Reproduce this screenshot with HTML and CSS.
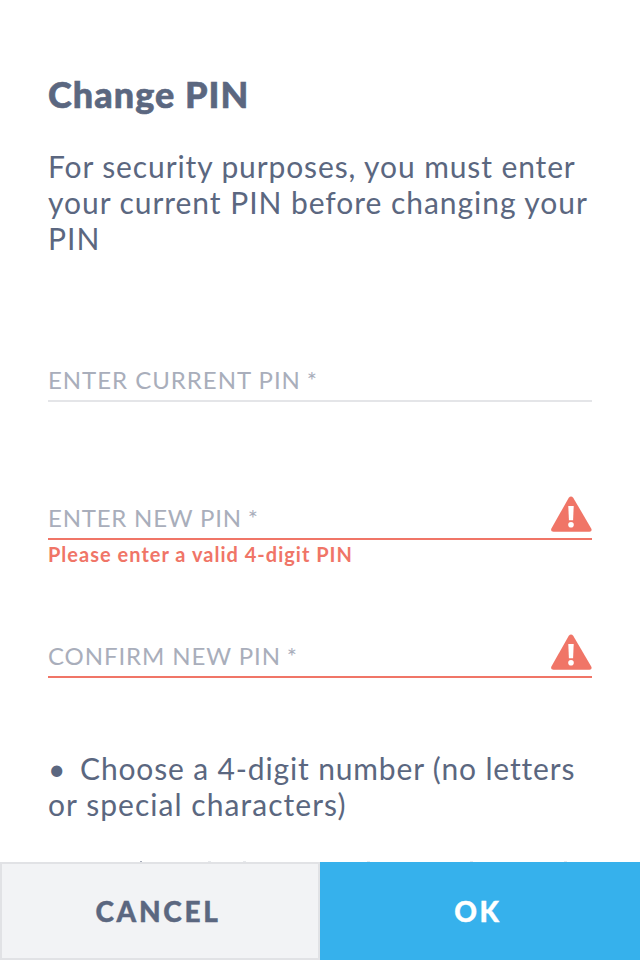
FILE: index.html
```html
<!DOCTYPE html>
<html lang="en">
<head>
<meta charset="utf-8">
<title>Change PIN</title>
<link rel="stylesheet" href="styles.css">
</head>
<body>
<form class="screen">
  <main class="content">
    <h1 class="title">Change PIN</h1>
    <p class="intro"><span class="tight">For security purposes, you must enter</span> <span class="snug">your current PIN before changing your</span> PIN</p>
    <div class="fields">
      <div class="field"><span class="label label-current">ENTER CURRENT PIN<span class="star"> *</span></span></div>
      <div class="field field-error"><span class="label label-new">ENTER NEW PIN<span class="star"> *</span></span>
        <svg class="warn" viewBox="0 0 42 36"><path d="M18.8 1.7Q21 -.9 23.2 1.7L41.2 32.5Q42.6 35.5 39.5 35.7H3.5Q.2 35.5 1.4 32.5Z" fill="#f07567"/><path d="M18.3 10h5.4l-.6 14.2h-4.2z" fill="#fff"/><circle cx="21" cy="28.8" r="2.8" fill="#fff"/></svg>
      </div>
      <p class="message">Please enter a valid 4-digit PIN</p>
      <div class="field field-error"><span class="label label-confirm">CONFIRM NEW PIN<span class="star"> *</span></span>
        <svg class="warn" viewBox="0 0 42 36"><path d="M18.8 1.7Q21 -.9 23.2 1.7L41.2 32.5Q42.6 35.5 39.5 35.7H3.5Q.2 35.5 1.4 32.5Z" fill="#f07567"/><path d="M18.3 10h5.4l-.6 14.2h-4.2z" fill="#fff"/><circle cx="21" cy="28.8" r="2.8" fill="#fff"/></svg>
      </div>
    </div>
    <p class="rule"><span class="bullet">•</span><span class="tighter">Choose a 4-digit number (no letters</span> or special characters)</p>
    <!-- Tips of the next rule, which continues below the fold -->
    <div class="next-rule"><i class="tip tip-strong"></i><i class="tip"></i><i class="tip"></i><i class="tip"></i><i class="tip"></i><i class="tip"></i></div>
  </main>
  <footer class="actions">
    <button type="button" class="button cancel">CANCEL</button>
    <button type="button" class="button ok">OK</button>
  </footer>
</form>
</body>
</html>
```
FILE: styles.css
```css
* { box-sizing: border-box; }
body { margin: 0; background: #fff; color: #5b6780; font-family: Lato, "Liberation Sans", sans-serif; }
h1, p { margin: 0; }
.screen { height: 960px; display: flex; flex-direction: column; overflow: hidden; }
.content { flex: 1; min-height: 0; overflow: hidden; padding: 71px 48px 0; display: flex; flex-direction: column; }
.title { font-size: 36px; line-height: 46px; font-weight: 900; letter-spacing: 1.05px; -webkit-text-stroke: .6px currentColor; }
.intro, .rule { font-size: 30px; line-height: 36px; letter-spacing: 1.05px; }
.intro { margin-top: 31px; margin-right: -10px; }
.tight { letter-spacing: .89px; }
.snug { letter-spacing: .95px; }
.tighter { letter-spacing: .85px; }
.fields { height: 418px; margin-top: 76px; flex: none; }
.field { height: 70px; display: flex; justify-content: space-between; align-items: flex-end; border-bottom: 2px solid #e4e5e8; }
.field + .field { margin-top: 68px; }
.field-error { border-color: #f07567; }
.label { font-size: 24px; line-height: 30px; padding-bottom: 5px; color: #a9aebb; }
.label-current { letter-spacing: .97px; }
.label-new { letter-spacing: .78px; }
.label-confirm { letter-spacing: .91px; }
.star { letter-spacing: -.3px; }
.warn { width: 42px; height: 36px; margin-bottom: 6px; }
.message { height: 68px; padding-top: 2px; font-size: 20px; line-height: 24px; font-weight: 700; letter-spacing: 1.01px; color: #f07567; }
.bullet { display: inline-block; width: 32px; letter-spacing: 0; }
.next-rule { margin-top: auto; padding-left: 92px; height: 1px; flex: none; display: grid; grid-template-columns: 68px 35px 124px 103px 94px 3px; }
.tip { width: 3px; height: 1px; background: #e7e9ec; }
.tip-strong { width: 2px; background: #a9aebb; }
.actions { height: 98px; flex: none; display: grid; grid-template-columns: 1fr 1fr; }
.button { border: 0; padding: 0 4px 0 0; font-family: inherit; font-size: 28px; font-weight: 900; letter-spacing: 2.7px; -webkit-text-stroke: .4px currentColor; }
.cancel { background: #f2f3f5; border: 2px solid #e1e2e5; color: #5b6780; }
.ok { background: #36b1ec; color: #fff; }
```
